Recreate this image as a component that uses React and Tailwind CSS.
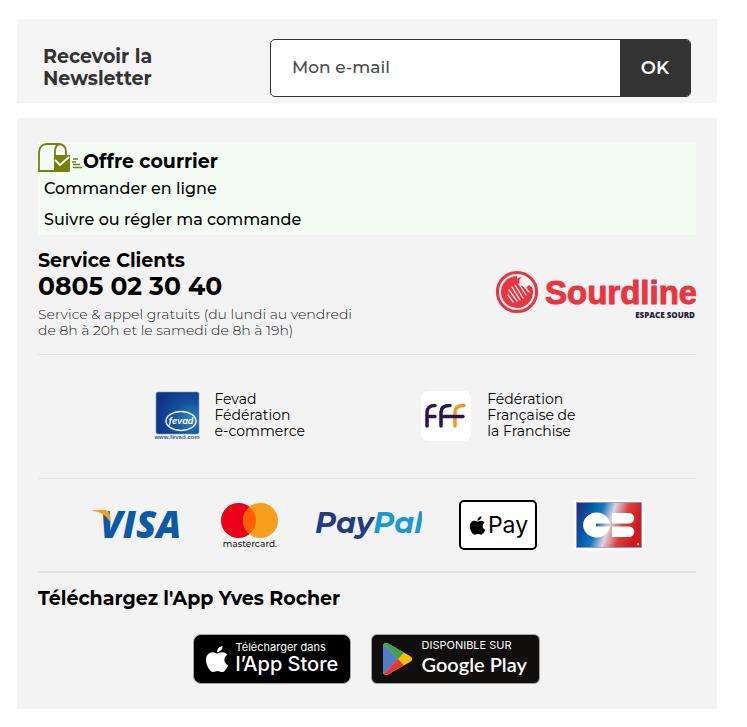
import React from "react";
import { FaApple } from "react-icons/fa";

function MailboxIcon() {
  return (
    <svg width="45" height="31" viewBox="0 0 45 31" fill="none" aria-hidden="true">
      <path d="M17 29H1V11C1 5 4 2 9 2H20C25 2 28 5 28 10V14" stroke="#72820f" strokeWidth="1.8" />
      <path d="M17 29V10C17 5 19 2 22.500 2" stroke="#72820f" strokeWidth="1.8" />
      <rect x="16" y="13" width="16" height="17" rx="1" fill="#72820f" />
      <path d="M17 18L22 23L31 15" stroke="#f4fcf5" strokeWidth="2" />
      <path d="M35 17H40M34 20H38M35 22.500H42M35 25.500H44" stroke="#72820f" strokeWidth="1.4" />
    </svg>
  );
}

function SourdlineLogo() {
  return (
    <svg width="201" height="50" viewBox="0 0 201 50" role="img" aria-label="Sourdline espace sourd">
      <circle cx="22" cy="22" r="19.600" fill="none" stroke="#e9353f" strokeWidth="3" />
      <circle cx="22" cy="22" r="16" fill="#e9353f" />
      <path d="M22 5.500C31 4 38 11 38 18L34 15L31 18L25 15L22 10Z" fill="#f3f3f3" />
      <path d="M18 15C20 10 23 7 27 7C24 9 24 12 25 15Z" fill="#e9353f" />
      <path d="M14 20L22 31M17 17L25 30M20 15L28 28M24 14L31 25M13 25L18 32M28 15L34 22" stroke="#f3f3f3" strokeWidth="1.300" strokeLinecap="round" />
      <text x="50" y="34" fill="#e9353f" stroke="#e9353f" strokeWidth="1" strokeLinejoin="round" fontSize="33" fontWeight="700" fontFamily="'Liberation Sans', Arial, sans-serif">Sourdline</text>
      <text x="200" y="48" textAnchor="end" fill="#25213b" fontSize="8" fontWeight="800" fontFamily="'Open Sans', sans-serif">ESPACE SOURD</text>
    </svg>
  );
}

function FevadLogo() {
  return (
    <svg width="46" height="50" viewBox="0 0 46 50" role="img" aria-label="Fevad">
      <defs>
        <radialGradient id="fevadBlue" cx="0.8" cy="0.65" r="0.8">
          <stop offset="0" stopColor="#3387bd" />
          <stop offset="0.5" stopColor="#15529b" />
          <stop offset="1" stopColor="#10348a" />
        </radialGradient>
      </defs>
      <rect x="2" y="1" width="43" height="42" rx="2" fill="url(#fevadBlue)" stroke="#7e9bca" strokeWidth="0.6" />
      <ellipse cx="27" cy="30" rx="15" ry="9.500" fill="none" stroke="#e5eef8" strokeWidth="1.500" />
      <text x="27" y="33" textAnchor="middle" fill="#fff" fontSize="9" fontStyle="italic" fontWeight="600" fontFamily="Inter, sans-serif">fevad</text>
      <text x="23" y="48" textAnchor="middle" fill="#3b5ea5" fontSize="6" fontWeight="700" fontFamily="'Liberation Sans', sans-serif">www.fevad.com</text>
    </svg>
  );
}

function FranchiseLogo() {
  return (
    <svg width="50" height="50" viewBox="0 0 50 50" role="img" aria-label="Fédération Française de la Franchise">
      <rect width="50" height="50" rx="7" fill="#fff" />
      <g fill="none" strokeWidth="3.500" strokeLinecap="round">
        <path d="M6 35V21C6 17 9 14.500 14 14.500M6 25.500H14" stroke="#2c174d" />
        <path d="M34 35V21C34 17 37 14.500 43 14.500" stroke="#f7981d" />
        <path d="M20 35V21C20 17 23 14.500 29 14.500M20 25.500H42" stroke="#2c174d" />
      </g>
    </svg>
  );
}

function VisaLogo() {
  return (
    <svg width="91" height="50" viewBox="0 0 91 50" role="img" aria-label="Visa">
      <text x="7" y="38" fill="#0b5aa6" fontSize="37" fontWeight="800" fontStyle="italic" fontFamily="'Open Sans', sans-serif">VISA</text>
      <path d="M0 10H11C15 10 16 12 17 16L18 23C13 15 8 12 0 11Z" fill="#f3a024" />
    </svg>
  );
}

function MastercardLogo() {
  return (
    <svg width="57" height="50" viewBox="0 0 57 50" role="img" aria-label="Mastercard">
      <circle cx="17.500" cy="20.500" r="17.500" fill="#eb001b" />
      <circle cx="39.500" cy="20.500" r="17.500" fill="#f79e1b" />
      <path d="M28.500 6.900A17.500 17.500 0 0 1 28.500 34.100A17.500 17.500 0 0 1 28.500 6.900Z" fill="#ff5f00" />
      <text x="29" y="47" textAnchor="middle" fill="#1c1c1c" fontSize="9" fontWeight="500" fontFamily="Montserrat, Inter, sans-serif">mastercard.</text>
    </svg>
  );
}

function PaypalLogo() {
  return (
    <svg width="107" height="50" viewBox="0 0 107 50" role="img" aria-label="PayPal">
      <text x="0" y="33" fontSize="29" fontWeight="700" fontStyle="italic" fontFamily="Montserrat, Lato, sans-serif">
        <tspan fill="#253b80">Pay</tspan><tspan fill="#179bd7">Pal</tspan>
      </text>
    </svg>
  );
}

function CarteBancaireLogo() {
  return (
    <svg width="70" height="50" viewBox="0 0 70 50" role="img" aria-label="CB">
      <defs>
        <linearGradient id="cbFlag" gradientUnits="userSpaceOnUse" x1="2" y1="12" x2="62" y2="32">
          <stop offset="0" stopColor="#2c2f7d" />
          <stop offset="0.2" stopColor="#0058a5" />
          <stop offset="0.38" stopColor="#1476bd" />
          <stop offset="0.56" stopColor="#dcd3e2" />
          <stop offset="0.77" stopColor="#d9403a" />
          <stop offset="1" stopColor="#cf171c" />
        </linearGradient>
      </defs>
      <rect width="70" height="50" fill="#fff" />
      <rect x="2.500" y="2.500" width="65" height="45" fill="url(#cbFlag)" stroke="#8298c6" strokeWidth="0.800" />
      <path d="M36 23.500H22V26.500H36A13.500 12.500 0 1 1 36 23.500Z" fill="#fff" />
      <path d="M38 13H55A5.200 5.200 0 0 1 55 23.500H38ZM38 26.500H55A5.200 5.200 0 0 1 55 37H38Z" fill="#fff" />
      <circle cx="64" cy="44" r="1.300" fill="#f0a0a0" />
    </svg>
  );
}

function PlayIcon() {
  return (
    <svg width="30" height="32" viewBox="0 0 30 32" aria-hidden="true">
      <clipPath id="playShape">
        <path d="M0 3C0 0 3 -0.500 5 0.500L27 13C30 15 30 17 27 19L5 31.500C3 32.500 0 32 0 29Z" />
      </clipPath>
      <g clipPath="url(#playShape)">
        <path d="M0 0H30V32H0Z" fill="#fbbc04" />
        <path d="M0 0L15 16L0 32Z" fill="#557bc6" />
        <path d="M0 0H12L21 9.500L15 16Z" fill="#37a64a" />
        <path d="M0 32H12L21 22.500L15 16Z" fill="#ea3535" />
      </g>
    </svg>
  );
}

export default function App() {
  return (
    <div className="flex flex-col gap-[15px] bg-white pt-[19px] pr-[30px] pb-[18px] pl-[17px] font-[Montserrat,Inter,sans-serif] text-black">
      <form className="flex items-center bg-[#f5f5f5] px-[26px] pt-5 pb-1.5" onSubmit={(e) => e.preventDefault()}>
        <label htmlFor="email" className="w-[227px] shrink-0 text-[19px] leading-[22px] font-bold text-[#333]">
          Recevoir la
          <br />
          Newsletter
        </label>
        <div className="flex h-[58px] min-w-0 flex-1 overflow-hidden rounded-[5px] border border-[#333] bg-white">
          <input
            id="email"
            type="email"
            placeholder="Mon e-mail"
            className="min-w-0 flex-1 px-[21px] text-[17px] font-medium text-[#333] outline-none placeholder:text-[#4a4a4a]"
          />
          <button type="submit" className="w-[70px] bg-[#333] text-[18px] font-semibold text-white">
            OK
          </button>
        </div>
      </form>

      <footer className="bg-[#f3f3f3] px-[21px] pt-6 pb-[25px]">
        <section className="bg-[#f4fcf5]">
          <div className="flex h-[31px] items-end">
            <MailboxIcon />
            <h2 className="text-[19px] leading-[22px] font-bold">Offre courrier</h2>
          </div>
          <ul className="pl-1.5 text-[16px] leading-[31px] font-medium">
            <li><a href="#commander">Commander en ligne</a></li>
            <li><a href="#suivre">Suivre ou régler ma commande</a></li>
          </ul>
        </section>

        <section className="flex items-end justify-between border-b border-[#e3e3e3] pt-3.5 pb-4">
          <div>
            <h2 className="text-[19px] leading-6 font-bold">Service Clients</h2>
            <p className="text-[25px] leading-[26px] font-bold">0805 02 30 40</p>
            <p className="mt-[7px] text-[14px] leading-4 font-light text-[#222]">
              Service &amp; appel gratuits (du lundi au vendredi
              <br />
              de 8h à 20h et le samedi de 8h à 19h)
            </p>
          </div>
          <div className="pb-[18px]"><SourdlineLogo /></div>
        </section>

        <section className="flex justify-evenly border-b border-[#e3e3e3] pt-9 pr-1 pb-[37px] text-[14px] leading-4">
          <div className="flex items-start gap-[14px]">
            <FevadLogo />
            <p>Fevad<br />Fédération<br />e-commerce</p>
          </div>
          <div className="flex items-start gap-4">
            <FranchiseLogo />
            <p>Fédération<br />Française de<br />la Franchise</p>
          </div>
        </section>

        <section className="flex items-center justify-center gap-[37px] border-b-2 border-[#e3e3e3] py-[21px] pl-0.5">
          <VisaLogo />
          <MastercardLogo />
          <PaypalLogo />
          <div className="flex h-[50px] w-[78px] items-center justify-center rounded-[5px] border-2 border-black bg-white font-[Inter,sans-serif] text-[23px]">
            <FaApple size={21} aria-hidden="true" />
            <span>Pay</span>
          </div>
          <CarteBancaireLogo />
        </section>

        <section>
          <h2 className="pt-3.5 text-[19px] leading-6 font-bold">Téléchargez l'App Yves Rocher</h2>
          <div className="mt-[23px] flex justify-center gap-5 pr-0.5 font-[Inter,sans-serif] text-white">
            <a href="#app-store" className="flex h-[50px] w-[158px] items-center gap-1 rounded-[8px] border border-[#a6a6a6] bg-black pl-2">
              <FaApple size={30} aria-hidden="true" />
              <span className="flex flex-col whitespace-nowrap pb-1">
                <span className="text-[11px] leading-[14px]">Télécharger dans</span>
                <span className="text-[20px] leading-5 font-medium">l’App Store</span>
              </span>
            </a>
            <a href="#google-play" className="flex h-[50px] w-[169px] items-center gap-[9px] rounded-[6px] border border-[#a6a6a6] bg-[#100f0d] pl-[11px]">
              <PlayIcon />
              <span className="flex flex-col whitespace-nowrap pb-1">
                <span className="text-[11px] leading-[14px]">DISPONIBLE SUR</span>
                <span className="font-[Lato,sans-serif] text-[20px] leading-6 font-semibold">Google Play</span>
              </span>
            </a>
          </div>
        </section>
      </footer>
    </div>
  );
}
